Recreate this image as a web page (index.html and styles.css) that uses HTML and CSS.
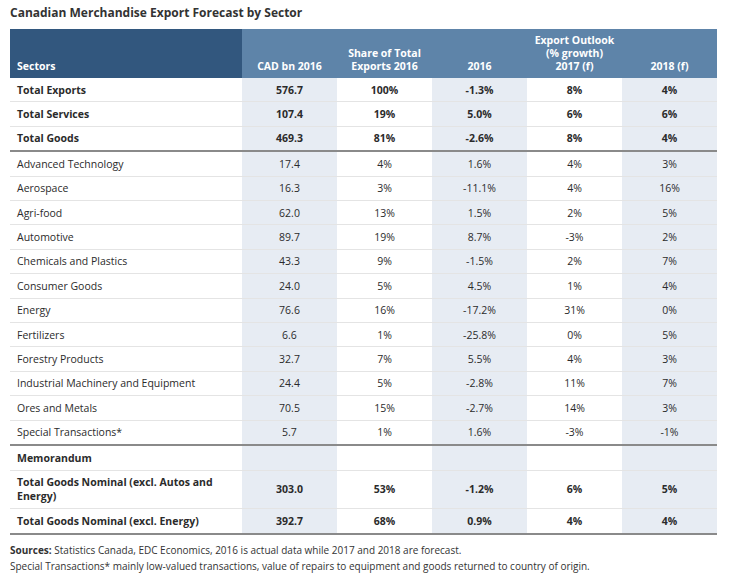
FILE: index.html
```html
<!DOCTYPE html>
<html lang="en">
<head>
<meta charset="utf-8">
<title>Canadian Merchandise Export Forecast by Sector</title>
<link rel="stylesheet" href="styles.css">
</head>
<body>
<div class="wrap">
  <h1 class="title">Canadian Merchandise Export Forecast by Sector</h1>
  <table class="tbl">
    <colgroup>
      <col class="c-sector">
      <col class="c-num">
      <col class="c-num">
      <col class="c-num">
      <col class="c-num">
      <col class="c-num">
    </colgroup>
    <thead>
      <tr>
        <th class="h-sector">Sectors</th>
        <th>CAD bn 2016</th>
        <th>Share of Total<br>Exports 2016</th>
        <th>2016</th>
        <th>Export Outlook<br>(% growth)<br>2017 (f)</th>
        <th>2018 (f)</th>
      </tr>
    </thead>
    <tbody>
      <tr class="bold"><td>Total Exports</td><td class="sh">576.7</td><td>100%</td><td class="sh">-1.3%</td><td>8%</td><td class="sh">4%</td></tr>
      <tr class="bold"><td>Total Services</td><td class="sh">107.4</td><td>19%</td><td class="sh">5.0%</td><td>6%</td><td class="sh">6%</td></tr>
      <tr class="bold thick"><td>Total Goods</td><td class="sh">469.3</td><td>81%</td><td class="sh">-2.6%</td><td>8%</td><td class="sh">4%</td></tr>
      <tr><td>Advanced Technology</td><td class="sh">17.4</td><td>4%</td><td class="sh">1.6%</td><td>4%</td><td class="sh">3%</td></tr>
      <tr><td>Aerospace</td><td class="sh">16.3</td><td>3%</td><td class="sh">-11.1%</td><td>4%</td><td class="sh">16%</td></tr>
      <tr><td>Agri-food</td><td class="sh">62.0</td><td>13%</td><td class="sh">1.5%</td><td>2%</td><td class="sh">5%</td></tr>
      <tr><td>Automotive</td><td class="sh">89.7</td><td>19%</td><td class="sh">8.7%</td><td>-3%</td><td class="sh">2%</td></tr>
      <tr><td>Chemicals and Plastics</td><td class="sh">43.3</td><td>9%</td><td class="sh">-1.5%</td><td>2%</td><td class="sh">7%</td></tr>
      <tr><td>Consumer Goods</td><td class="sh">24.0</td><td>5%</td><td class="sh">4.5%</td><td>1%</td><td class="sh">4%</td></tr>
      <tr><td>Energy</td><td class="sh">76.6</td><td>16%</td><td class="sh">-17.2%</td><td>31%</td><td class="sh">0%</td></tr>
      <tr><td>Fertilizers</td><td class="sh">6.6</td><td>1%</td><td class="sh">-25.8%</td><td>0%</td><td class="sh">5%</td></tr>
      <tr><td>Forestry Products</td><td class="sh">32.7</td><td>7%</td><td class="sh">5.5%</td><td>4%</td><td class="sh">3%</td></tr>
      <tr><td>Industrial Machinery and Equipment</td><td class="sh">24.4</td><td>5%</td><td class="sh">-2.8%</td><td>11%</td><td class="sh">7%</td></tr>
      <tr><td>Ores and Metals</td><td class="sh">70.5</td><td>15%</td><td class="sh">-2.7%</td><td>14%</td><td class="sh">3%</td></tr>
      <tr class="thick"><td>Special Transactions*</td><td class="sh">5.7</td><td>1%</td><td class="sh">1.6%</td><td>-3%</td><td class="sh">-1%</td></tr>
      <tr class="bold"><td>Memorandum</td><td class="sh"></td><td></td><td class="sh"></td><td></td><td class="sh"></td></tr>
      <tr class="bold"><td>Total Goods Nominal (excl. Autos and Energy)</td><td class="sh">303.0</td><td>53%</td><td class="sh">-1.2%</td><td>6%</td><td class="sh">5%</td></tr>
      <tr class="bold thick"><td>Total Goods Nominal (excl. Energy)</td><td class="sh">392.7</td><td>68%</td><td class="sh">0.9%</td><td>4%</td><td class="sh">4%</td></tr>
    </tbody>
  </table>
  <div class="notes">
    <p><strong>Sources:</strong> Statistics Canada, EDC Economics, 2016 is actual data while 2017 and 2018 are forecast.</p>
    <p>Special Transactions* mainly low-valued transactions, value of repairs to equipment and goods returned to country of origin.</p>
  </div>
</div>
</body>
</html>
```
FILE: styles.css
```css
html, body {
  margin: 0;
  padding: 0;
  background: #ffffff;
}
body {
  font-family: "Open Sans", "DejaVu Sans", sans-serif;
  color: #2b2b2b;
}
.wrap {
  padding: 4px 10px 0 10px;
}
.title {
  margin: 0 0 7px 0;
  font-size: 12px;
  line-height: 18px;
  font-weight: 700;
  color: #333333;
}
.tbl {
  border-collapse: collapse;
  width: 707px;
  table-layout: fixed;
  font-size: 10.5px;
}
.c-sector { width: 232px; }
.c-num { width: 95px; }
.tbl th {
  background: #5e84a9;
  color: #ffffff;
  font-weight: 700;
  font-size: 10.5px;
  line-height: 13px;
  text-align: center;
  vertical-align: bottom;
  padding: 4px 4px 5px 4px;
  height: 40px;
}
.tbl th.h-sector {
  background: #32577e;
  text-align: left;
  padding-left: 7px;
}
.tbl td {
  text-align: center;
  vertical-align: middle;
  line-height: 14.4px;
  padding: 4.5px 4px;
  border-bottom: 1px solid #e4e4e4;
}
.tbl td:first-child {
  text-align: left;
  padding-left: 7px;
}
.tbl td.sh {
  background: #e7ecf3;
}
.tbl tr.bold td {
  font-weight: 700;
}
.tbl tr.thick td {
  border-bottom: 2px solid #8a8a8a;
}
.notes {
  margin-top: 7px;
  font-size: 10px;
  line-height: 16px;
  color: #333333;
}
.notes p {
  margin: 0;
}
```
